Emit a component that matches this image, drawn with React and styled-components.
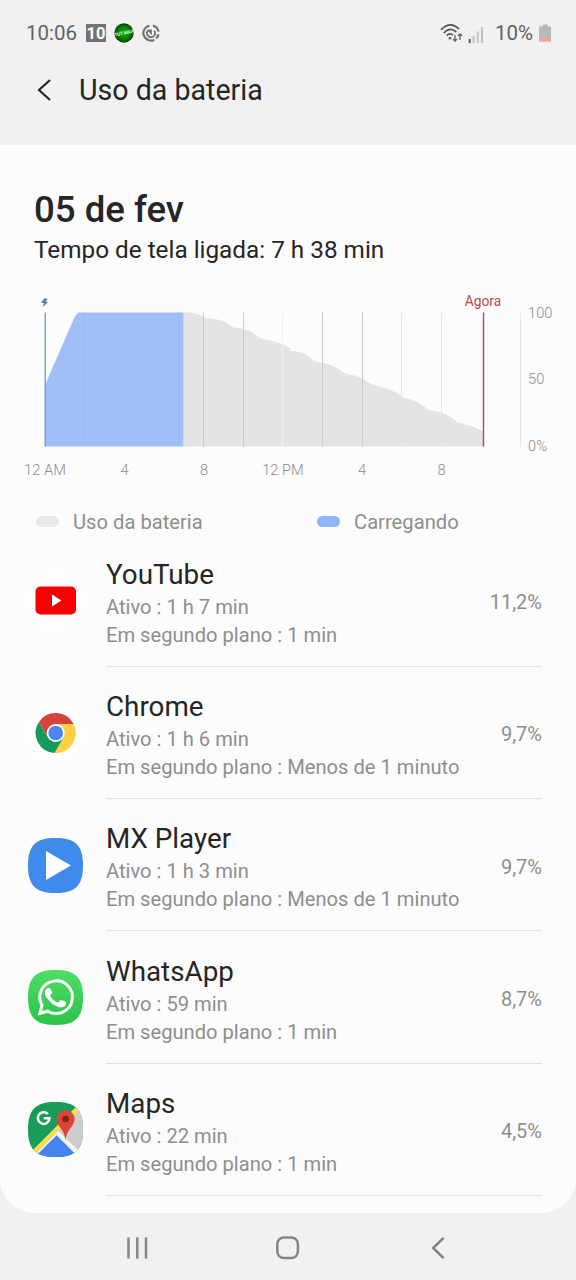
import React from "react";
import styled, { createGlobalStyle } from "styled-components";

const apps = [
  {
    name: "YouTube",
    active: "1 h 7 min",
    background: "1 min",
    usage: "11,2%",
    icon: YouTubeIcon,
  },
  {
    name: "Chrome",
    active: "1 h 6 min",
    background: "Menos de 1 minuto",
    usage: "9,7%",
    icon: ChromeIcon,
  },
  {
    name: "MX Player",
    active: "1 h 3 min",
    background: "Menos de 1 minuto",
    usage: "9,7%",
    icon: MXPlayerIcon,
  },
  {
    name: "WhatsApp",
    active: "59 min",
    background: "1 min",
    usage: "8,7%",
    icon: WhatsAppIcon,
  },
  {
    name: "Maps",
    active: "22 min",
    background: "1 min",
    usage: "4,5%",
    icon: MapsIcon,
  },
];

const hourLabels = [
  { x: 45, text: "12 AM" },
  { x: 124.5, text: "4" },
  { x: 204, text: "8" },
  { x: 283, text: "12 PM" },
  { x: 362, text: "4" },
  { x: 441.5, text: "8" },
];

const gridLines = [
  { x: 203.5, color: "#cbcbcb" },
  { x: 243.5, color: "#cbcbcb" },
  { x: 282.5, color: "#efefef" },
  { x: 322.5, color: "#cbcbcb" },
  { x: 362.5, color: "#cbcbcb" },
  { x: 401.5, color: "#e6e6e6" },
  { x: 441.5, color: "#e6e6e6" },
  { x: 520.5, color: "#e6e6e6" },
];

const SQUIRCLE =
  "M27.5 0C47.5 0 55 7.5 55 27.5S47.5 55 27.5 55 0 47.5 0 27.5 7.5 0 27.5 0Z";

function YouTubeIcon() {
  return (
    <AppIcon viewBox="0 0 55 55">
      <path d={SQUIRCLE} fill="#fdfdfd" />
      <rect x="7.5" y="13.5" width="40.5" height="28" rx="5" fill="#f60002" />
      <path d="M24 21.5v12l9.4-6z" fill="#fff" />
    </AppIcon>
  );
}

function ChromeIcon() {
  const slice = "M17.9-9H0L-7.8 4.5-16.7-11A20 20 0 0 1 17.9-9Z";
  return (
    <AppIcon viewBox="0 0 55 55">
      <path d={SQUIRCLE} fill="#fdfdfd" />
      <g transform="translate(27.7 28)">
        <path d={slice} fill="#d3453b" />
        <path d={slice} fill="#fdcf45" transform="rotate(120)" />
        <path d={slice} fill="#16995a" transform="rotate(240)" />
        <circle r="9" fill="#fff" />
        <circle r="7.3" fill="#4a86ee" />
      </g>
    </AppIcon>
  );
}

function MXPlayerIcon() {
  return (
    <AppIcon viewBox="0 0 55 55">
      <path d={SQUIRCLE} fill="#3f8aeb" />
      <path d="M18 13v29L43 27.5z" fill="#fff" />
    </AppIcon>
  );
}

function WhatsAppIcon() {
  return (
    <AppIcon viewBox="0 0 55 55">
      <defs>
        <linearGradient id="wa" x1="0" y1="0" x2="0" y2="1">
          <stop offset="0" stopColor="#4fdd66" />
          <stop offset="1" stopColor="#2cc34a" />
        </linearGradient>
      </defs>
      <path d={SQUIRCLE} fill="url(#wa)" />
      <path
        d="M11.8 43.3l2.2-8A16.3 16.3 0 1 1 19.8 41.200z"
        fill="none"
        stroke="#fff"
        strokeWidth="3"
        strokeLinejoin="miter"
      />
      <path
        d="M22.3 18.9c-.4-.9-.8-.9-1.2-.9h-1c-.4 0-.9.1-1.4.7-.5.5-1.8 1.7-1.8 4.2s1.8 4.900 2.1 5.2c.3.3 3.6 5.7 8.9 7.8 4.4 1.7 5.3 1.4 6.3 1.3 1-.1 3.1-1.3 3.5-2.5.4-1.2.4-2.3.3-2.5-.1-.2-.5-.4-1-.6l-3.6-1.7c-.5-.2-.9-.3-1.2.3-.4.5-1.4 1.7-1.7 2-.3.4-.6.4-1.1.1-.5-.2-2.2-.8-4.2-2.6-1.6-1.4-2.6-3.1-2.9-3.6-.3-.5 0-.8.2-1.1l1.6-2c.2-.3.2-.6 0-.9z"
        fill="#fff"
      />
    </AppIcon>
  );
}

function MapsIcon() {
  return (
    <AppIcon viewBox="0 0 55 55">
      <defs>
        <clipPath id="maps">
          <path d={SQUIRCLE} />
        </clipPath>
      </defs>
      <g clipPath="url(#maps)">
        <rect width="55" height="55" fill="#189c58" />
        <path d="M55 0L27 28 55 56z" fill="#cdcdcd" />
        <path d="M0 59L28 31 56 59z" fill="#4484ee" />
        <path d="M28 29.5L56 57.5" stroke="#f5f5f7" strokeWidth="4.5" />
        <path d="M1 55L54 2" stroke="#fbdc4c" strokeWidth="4.5" />
        <path d="M30 30.5L4 56.5" stroke="#f5f5f7" strokeWidth="1.8" />
      </g>
      <path
        d="M37.5 38.5c-.6-6.5-3-9.5-5.6-13.2-1.9-2.7-3.3-4.9-3.3-8.2a9 9 0 0 1 18 0c0 3.3-1.5 5.5-3.4 8.2-2.6 3.7-5.1 6.700-5.7 13.2z"
        fill="#dd4437"
      />
      <circle cx="37.600" cy="17" r="3.3" fill="#7c231b" />
      <path
        d="M19.8 12a5.800 5.800 0 1 0 1.700 4.300h-5.700"
        fill="none"
        stroke="#fff"
        strokeWidth="2.5"
      />
    </AppIcon>
  );
}

const BatteryChart = () => (
  <Chart viewBox="0 290 576 195">
    <path
      d="M183.5 312.5Q193 312 197 313.5T204 318Q218 318.5 225 322T233 327.5Q246 328 253 333T262 339Q274 340.5 283 344.5T290 351Q302 351 308 356T316 361.5Q327 363 334 366.5T346 374Q356 375 363 379T373 385Q386 387 394 391.5T402 397.5Q414 399.5 420 403.5T429 410Q443 412 450 416.5T457 422.5Q468 424.5 476 428L483.5 431.5V446.5H183.5Z"
      fill="#e4e4e4"
    />
    {gridLines.map((line) => (
      <path
        key={line.x}
        d={`M${line.x} 312.5V446.5`}
        stroke={line.color}
        strokeWidth="1"
      />
    ))}
    <path
      d="M45 446.5V385L72 323Q76 313.5 78.500 312.5H183.5V446.5Z"
      fill="#a0bff7"
    />
    <path d="M84.5 313V446M178.5 313V446" stroke="#9bbaf2" />
    <path d="M45.2 312.5V446.5" stroke="#7298c8" strokeWidth="1.3" />
    <path
      d="M44 298.5l-2.8 4.500 2.800-.1-1.200 4.200 5.600-5.300-2.800.2 2-3.500z"
      fill="#4f7dad"
    />
    <path d="M483.5 312.5V446.5" stroke="#bd4650" strokeWidth="1.4" />
    <NowLabel x="483" y="306">
      Agora
    </NowLabel>
    <AxisLabel x="528" y="317.5">
      100
    </AxisLabel>
    <AxisLabel x="528" y="384">
      50
    </AxisLabel>
    <AxisLabel x="528" y="450.5">
      0%
    </AxisLabel>
    {hourLabels.map((label) => (
      <HourLabel key={label.x} x={label.x} y="475">
        {label.text}
      </HourLabel>
    ))}
  </Chart>
);

const App = () => {
  return (
    <Screen>
      <GlobalStyle />
      <StatusBar>
        <Clock>10:06</Clock>
        <StatusIcons>
          <DateBadge>10</DateBadge>
          <svg width="20" height="20" viewBox="0 0 20 20">
            <defs>
              <radialGradient id="ball">
                <stop offset="0" stopColor="#12b512" />
                <stop offset="0.6" stopColor="#078407" />
                <stop offset="1" stopColor="#044004" />
              </radialGradient>
            </defs>
            <circle cx="10" cy="10" r="9.7" fill="url(#ball)" />
            <BallText x="10" y="11.5" transform="rotate(-12 10 10)">
              TUT MAX
            </BallText>
          </svg>
          <svg width="18" height="18" viewBox="0 0 18 18" fill="none">
            <path
              d="M11 1.6A7.6 7.6 0 0 1 16.5 7.6M16.5 10.2A7.6 7.6 0 0 1 14.2 14.5M12.3 15.9A7.6 7.6 0 1 1 7.5 1.6"
              stroke="#737373"
              strokeWidth="2.2"
            />
            <path
              d="M5.9 6.6A4 4 0 1 0 12.2 6.700M6.200 5.600L9 8.900V5.500"
              stroke="#737373"
              strokeWidth="1.800"
            />
          </svg>
        </StatusIcons>
        <StatusRight>
          <svg width="46" height="22" viewBox="0 0 46 22" fill="none">
            <path
              d="M1 7.8Q10 -1.6 19 6.8M3.8 11Q10 4.5 16.3 10M6.7 13.5Q10 10.5 13 13.2"
              stroke="#555"
              strokeWidth="1.7"
            />
            <circle cx="10" cy="16.3" r="1.3" fill="#555" />
            <path
              d="M15 13v6M13 17.2l2 2 2-2M20 18v-6M18 13.8l2-2 2 2"
              stroke="#555"
              strokeWidth="1.2"
            />
            <path d="M29.7 17v4" stroke="#555" strokeWidth="2" />
            <path
              d="M33.5 14v7M37.7 9.500V21M42 5v16"
              stroke="#c2c2c2"
              strokeWidth="2"
            />
          </svg>
          <BatteryLevel>10%</BatteryLevel>
          <svg width="12" height="18" viewBox="0 0 12 18">
            <path d="M3.5 0.5h5v2H12V17.5H0V2.5h3.5z" fill="#b9b9b9" />
            <rect y="14" width="12" height="3.5" fill="#f3a49c" />
          </svg>
        </StatusRight>
      </StatusBar>
      <Header>
        <svg width="16" height="24" viewBox="0 0 16 24" fill="none">
          <path
            d="M14 2L3 12l11 10"
            stroke="#252525"
            strokeWidth="2.2"
          />
        </svg>
        <HeaderTitle>Uso da bateria</HeaderTitle>
      </Header>
      <Panel>
        <DateTitle>05 de fev</DateTitle>
        <ScreenTime>Tempo de tela ligada: 7 h 38 min</ScreenTime>
        <BatteryChart />
        <Legend>
          <LegendItem>
            <Pill color="#e9e9e9" />
            Uso da bateria
          </LegendItem>
          <LegendItem>
            <Pill color="#8fb5f7" />
            Carregando
          </LegendItem>
        </Legend>
        {apps.map(({ name, active, background, usage, icon: Icon }) => (
          <AppRow key={name}>
            <Icon />
            <AppBody>
              <AppInfo>
                <AppName>{name}</AppName>
                <AppTime>Ativo : {active}</AppTime>
                <AppTime>Em segundo plano : {background}</AppTime>
              </AppInfo>
              <Usage>{usage}</Usage>
            </AppBody>
          </AppRow>
        ))}
      </Panel>
      <NavBar>
        <svg width="24" height="24" viewBox="0 0 24 24" fill="none">
          <path
            d="M3.5 2.5v19M12.3 2.5v19M21 2.5v19"
            stroke="#868686"
            strokeWidth="2.5"
            strokeLinecap="round"
          />
        </svg>
        <svg width="26" height="26" viewBox="0 0 26 26" fill="none">
          <rect
            x="2.3"
            y="2.5"
            width="20.6"
            height="20.6"
            rx="6.5"
            stroke="#868686"
            strokeWidth="2.5"
          />
        </svg>
        <svg width="24" height="24" viewBox="0 0 24 24" fill="none">
          <path
            d="M17 2.5L7.2 12l9.8 9.5"
            stroke="#868686"
            strokeWidth="2.5"
            strokeLinecap="round"
            strokeLinejoin="round"
          />
        </svg>
      </NavBar>
    </Screen>
  );
};

export default App;

const GlobalStyle = createGlobalStyle`
  * {
    box-sizing: border-box;
  }
  body {
    margin: 0;
    background: #f1f1f1;
    font-family: Roboto, "Liberation Sans", sans-serif;
  }
  svg {
    display: block;
    flex-shrink: 0;
  }
`;

const Screen = styled.div`
  width: 576px;
  height: 1280px;
  display: flex;
  flex-direction: column;
  overflow: hidden;
  background: #f1f1f1;
`;

// status bar
const StatusBar = styled.div`
  height: 60px;
  padding: 5px 25px 0 26px;
  display: flex;
  align-items: center;
  color: #636363;
`;

const Clock = styled.div`
  width: 60px;
  font-size: 20.5px;
  white-space: nowrap;
`;

const StatusIcons = styled.div`
  display: flex;
  align-items: center;
  gap: 8px;
`;

const DateBadge = styled.div`
  width: 20px;
  height: 18px;
  background: #737373;
  color: #fff;
  font-size: 16.5px;
  font-weight: 700;
  line-height: 19px;
  text-align: center;
`;

const BallText = styled.text`
  font-size: 4.5px;
  font-weight: 700;
  fill: #e6f7e6;
  text-anchor: middle;
`;

const StatusRight = styled.div`
  display: flex;
  align-items: center;
  margin-left: auto;
`;

const BatteryLevel = styled.div`
  font-size: 20.5px;
  margin: 0 6px 0 9px;
`;

// header
const Header = styled.div`
  height: 85px;
  padding: 0 0 25px 36px;
  display: flex;
  align-items: center;
`;

const HeaderTitle = styled.div`
  margin-left: 27px;
  font-size: 28.6px;
  color: #252525;
`;

const Panel = styled.div`
  height: 1068px;
  padding-top: 43px;
  background: #fcfcfc;
  border-radius: 0 0 35px 35px;
`;

const DateTitle = styled.div`
  height: 44px;
  padding-left: 34px;
  font-size: 36.6px;
  font-weight: 500;
  line-height: 44px;
  color: #252525;
`;

const ScreenTime = styled.div`
  height: 58px;
  padding-left: 34px;
  font-size: 24.3px;
  line-height: 36px;
  color: #252525;
`;

// chart
const Chart = styled.svg`
  width: 576px;
  height: 195px;
`;

const AxisLabel = styled.text`
  font-size: 14.7px;
  font-weight: 300;
  fill: #8c8c8c;
`;

const HourLabel = styled(AxisLabel)`
  text-anchor: middle;
`;

const NowLabel = styled(HourLabel)`
  font-size: 13.8px;
  font-weight: 400;
  fill: #bd4650;
`;

const Legend = styled.div`
  height: 49.5px;
  padding: 24px 0 0 36px;
  display: grid;
  grid-template-columns: 281px 1fr;
`;

const LegendItem = styled.div`
  height: 26px;
  display: flex;
  align-items: center;
  gap: 14px;
  font-size: 20.2px;
  color: #8e8e8e;
`;

const Pill = styled.div`
  width: 23px;
  height: 11px;
  margin-bottom: 2px;
  border-radius: 6px;
  background: ${(props) => props.color};
`;

// app list
const AppRow = styled.div`
  height: 132.3px;
  padding: 0 34px 0 28px;
  display: flex;
  align-items: center;
`;

const AppIcon = styled.svg`
  width: 55px;
  height: 55px;
`;

const AppBody = styled.div`
  flex: 1;
  height: 100%;
  margin-left: 23px;
  display: flex;
  align-items: center;
  justify-content: space-between;
  border-bottom: 1.5px solid #e2e2e2;
`;

const AppInfo = styled.div`
  padding-top: 4px;
`;

const AppName = styled.div`
  font-size: 27.8px;
  line-height: 37px;
  color: #252525;
`;

const AppTime = styled.div`
  font-size: 20.15px;
  line-height: 28px;
  color: #8e8e8e;
`;

const Usage = styled.div`
  padding-top: 4px;
  font-size: 20px;
  color: #8e8e8e;
`;

const NavBar = styled.div`
  flex: 1;
  padding: 2px 126px 0 125px;
  display: flex;
  align-items: center;
  justify-content: space-between;
`;
